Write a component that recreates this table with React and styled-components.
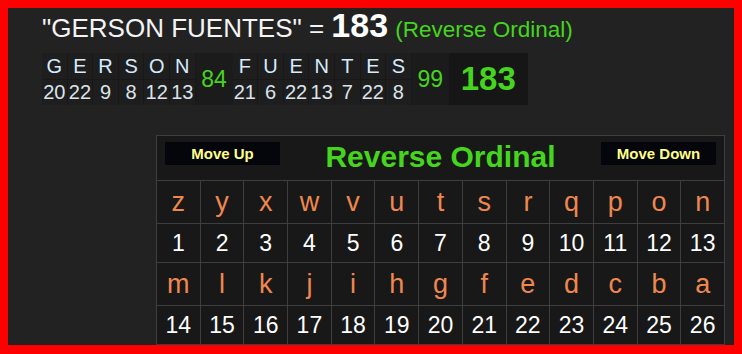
import React from 'react';
import styled, { createGlobalStyle } from 'styled-components';

const GlobalStyle = createGlobalStyle`
  body {
    margin: 0;
    background: #ff0000;
    font-family: "Liberation Sans", Arial, sans-serif;
  }
`;

const words = [
  { letters: 'GERSON', values: [20, 22, 9, 8, 12, 13], sum: 84 },
  { letters: 'FUENTES', values: [21, 6, 22, 13, 7, 22, 8], sum: 99 },
];

const lowerRows = [
  'zyxwvutsrqpon'.split(''),
  'mlkjihgfedcba'.split(''),
];

const App = () => {
  return (
    <Frame>
      <GlobalStyle />
      <Heading>
        "GERSON FUENTES" = <Total>183</Total> <Cipher>(Reverse Ordinal)</Cipher>
      </Heading>

      <WordTable>
        {words.map((word) => (
          <React.Fragment key={word.letters}>
            {word.letters.split('').map((ch, i) => (
              <LetterColumn key={i}>
                <LetterCell>{ch}</LetterCell>
                <ValueCell>{word.values[i]}</ValueCell>
              </LetterColumn>
            ))}
            <SumCell>{word.sum}</SumCell>
          </React.Fragment>
        ))}
        <GrandCell>183</GrandCell>
      </WordTable>

      <Chart>
        <ChartHeader>
          <MoveButton>Move Up</MoveButton>
          <ChartTitle>Reverse Ordinal</ChartTitle>
          <MoveButton>Move Down</MoveButton>
        </ChartHeader>
        {lowerRows.map((row, r) => (
          <React.Fragment key={r}>
            {row.map((ch) => (
              <ChartLetter key={ch}>{ch}</ChartLetter>
            ))}
            {row.map((ch, i) => (
              <ChartNumber key={ch + 'n'}>{r * 13 + i + 1}</ChartNumber>
            ))}
          </React.Fragment>
        ))}
      </Chart>
    </Frame>
  );
};

export default App;

const Frame = styled.div`
  box-sizing: border-box;
  width: 742px;
  height: 354px;
  border: 8px solid #ff0000;
  border-bottom-width: 9px;
  background: #222222;
  overflow: hidden;
  display: flex;
  flex-direction: column;
`;

const Heading = styled.div`
  height: 37px;
  padding-left: 34px;
  font-size: 26px;
  line-height: 34px;
  color: #f4f4f4;
  white-space: pre;
`;

const Total = styled.span`
  font-size: 34px;
  font-weight: bold;
  color: #ffffff;
`;

const Cipher = styled.span`
  font-size: 22.5px;
  color: #45d51f;
`;

const WordTable = styled.div`
  display: flex;
  align-self: flex-start;
  margin: 8px 0 0 34px;
  background: #1a1a1a;
`;

const LetterColumn = styled.div`
  display: flex;
  flex-direction: column;
  width: 25.6px;
`;

const LetterCell = styled.div`
  box-sizing: border-box;
  height: 27px;
  line-height: 27px;
  text-align: center;
  font-size: 20px;
  color: #d6ebff;
  background: #1e1e1e;
  border: 1px solid #181818;
  border-width: 0 1px 1px 0;
`;

const ValueCell = styled(LetterCell)`
  height: 25px;
  line-height: 24px;
  color: #dde3ea;
  border-bottom: 0;
`;

const SumCell = styled.div`
  width: 37px;
  display: flex;
  align-items: center;
  justify-content: center;
  font-size: 23px;
  color: #45d51f;
  background: #1b1b1b;
`;

const GrandCell = styled(SumCell)`
  width: 79px;
  font-size: 33px;
  font-weight: bold;
  background: #161616;
`;

const Chart = styled.div`
  box-sizing: border-box;
  align-self: flex-end;
  width: 569px;
  margin: 30px 9px 0 0;
  display: grid;
  grid-template-columns: repeat(13, 1fr);
  background: #181818;
  border-top: 1px solid #3e3e3e;
  border-left: 1px solid #3e3e3e;
`;

const ChartHeader = styled.div`
  grid-column: 1 / -1;
  height: 45px;
  display: flex;
  align-items: flex-start;
  justify-content: space-between;
  padding: 6px 8px 0 8px;
  box-sizing: border-box;
  border-right: 1px solid #3e3e3e;
  border-bottom: 1px solid #3e3e3e;
`;

const MoveButton = styled.div`
  width: 115px;
  height: 23px;
  line-height: 23px;
  text-align: center;
  background: #05050c;
  color: #ffff88;
  font-size: 15px;
  font-weight: bold;
`;

const ChartTitle = styled.div`
  font-size: 30px;
  font-weight: bold;
  line-height: 34px;
  margin-top: -2px;
  color: #45d51f;
`;

const ChartLetter = styled.div`
  height: 43px;
  box-sizing: border-box;
  display: flex;
  align-items: center;
  justify-content: center;
  font-size: 27px;
  color: #ef8750;
  border-right: 1px solid #3e3e3e;
  border-bottom: 1px solid #3e3e3e;
`;

const ChartNumber = styled(ChartLetter)`
  height: 39px;
  font-size: 23px;
  color: #ffffff;
`;
